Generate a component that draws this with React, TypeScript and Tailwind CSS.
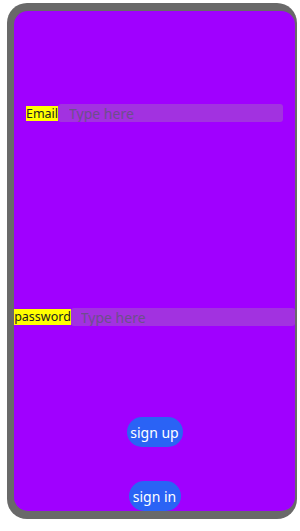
export default function App() {
  return (
    <div className="w-[300px] h-[531px] bg-white pt-[3px] pl-[7px] font-['Noto_Sans',sans-serif]">
      <div className="w-[290px] h-[516px] bg-[#696969] rounded-[20px] pt-[8px] pl-[7px] pr-[2px] pb-[8px]">
        <div className="w-[281px] h-[500px] bg-[#a000ff] rounded-[14px] flex flex-col items-center">
          <div className="mt-[93px] flex items-center">
            <span className="bg-[#ffff00] text-[12.5px] leading-[15px] text-[#222]">Email</span>
            <input
              placeholder="Type here"
              className="w-[225px] h-[18px] rounded-[3px] bg-[#a232e0] text-[14px] pl-[11px] text-black placeholder:text-[#6e4e8c] outline-none"
            />
          </div>
          <div className="mt-[186px] flex items-center">
            <span className="bg-[#ffff00] text-[12.5px] leading-[16px] text-[#222]">password</span>
            <input
              placeholder="Type here"
              className="w-[224px] h-[18px] rounded-[3px] bg-[#a232e0] text-[14px] pl-[10px] text-black placeholder:text-[#6e4e8c] outline-none"
            />
          </div>
          <button className="mt-[91px] w-[56px] h-[30px] rounded-full bg-[#2a63f5] text-white text-[14px]">
            sign up
          </button>
          <button className="mt-[34px] w-[52px] h-[30px] rounded-full bg-[#2a63f5] text-white text-[14px]">
            sign in
          </button>
        </div>
      </div>
    </div>
  );
}
